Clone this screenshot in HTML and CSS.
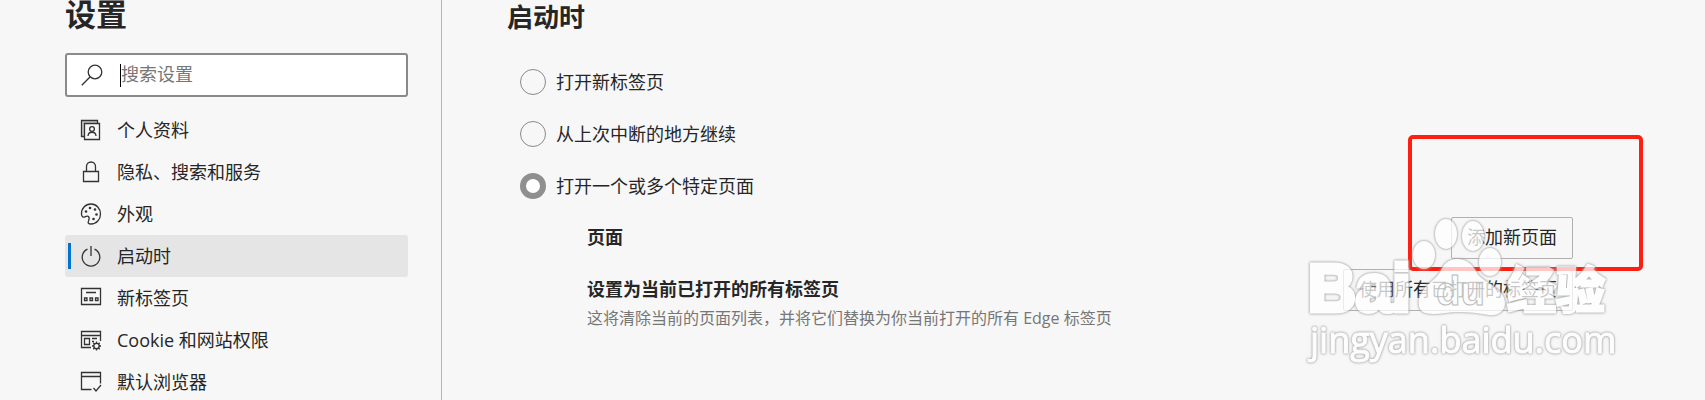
FILE: index.html
```html
<!DOCTYPE html>
<html lang="zh-CN">
<head>
<meta charset="utf-8">
<title>设置</title>
<link rel="stylesheet" href="styles.css">
</head>
<body>
<div class="layout">
  <aside class="sidebar">
    <h1 class="title">设置</h1>
    <label class="search">
      <svg class="icon search-icon" viewBox="0 0 22 22"><circle cx="14" cy="8" r="6.8"/><path d="M9.2 12.8L.8 21.2"/></svg>
      <span class="caret"></span>
      <input class="search-input" type="text" placeholder="搜索设置" aria-label="搜索设置">
    </label>
    <nav class="nav">
      <a class="nav-item" href="#"><svg class="icon" viewBox="0 0 22 22"><path d="M4 17.5H1.500V1.500H17.500V4" fill="#c8c8c8"/><path d="M4.500 4.500H19.500V20.500H4.500z" fill="#f7f7f7"/><circle cx="12" cy="10" r="2.400"/><path d="M8 17c.3-5 7.700-5 8 0"/></svg>个人资料</a>
      <a class="nav-item" href="#"><svg class="icon" viewBox="0 0 22 22"><path d="M3.500 10.500H18.500V20.500H3.500zM6.500 10V5.500a4.500 4.500 0 0 1 9 0V10"/></svg>隐私、搜索和服务</a>
      <a class="nav-item" href="#"><svg class="icon" viewBox="0 0 22 22"><path d="M1.500 11.500C1 5.500 5.500 1 11 1c5.500 0 9.500 4.500 9.500 10S16.500 21 11 21c-2.500 0-3.500-1-2.500-3 .8-1.800 1-3.500 0-4.500-1-.9-2.500-.2-3.700.4-1.800.9-3.100-.4-3.300-2.400z"/><g class="solid"><circle cx="6" cy="8.500" r="1.300"/><circle cx="10" cy="5" r="1.300"/><circle cx="15" cy="6.500" r="1.300"/><circle cx="16.500" cy="11.500" r="1.300"/><circle cx="13.500" cy="16" r="1.300"/></g></svg>外观</a>
      <a class="nav-item active" href="#" aria-current="page"><svg class="icon" viewBox="0 0 22 22"><path d="M7.500 4.200a8.800 8.800 0 1 0 7 0M11 1v10"/></svg>启动时</a>
      <a class="nav-item" href="#"><svg class="icon" viewBox="0 0 22 22"><path d="M1.500 1.500H20.500V17.500H1.500zM6 5.500H16M4.500 11h2.500v2.500H4.500zM10 11h2.500v2.500H10zM15.500 11H18v2.500h-2.500z"/></svg>新标签页</a>
      <a class="nav-item" href="#"><svg class="icon" viewBox="0 0 22 22"><path d="M11 18.500H1.500V2.500H20.500V12M1.500 6.500H20.500M4.500 9.500h5v6h-5zM12 9.500h5M12 12.500h2"/><circle cx="16.500" cy="17" r="2.700"/><path d="M16.500 12.500v2M16.500 19.500v2M12 17h2M19 17h2M13.300 13.800l1.400 1.400M18.300 18.800l1.400 1.400M19.700 13.800l-1.400 1.400M14.700 18.800l-1.400 1.400"/></svg>Cookie 和网站权限</a>
      <a class="nav-item" href="#"><svg class="icon" viewBox="0 0 22 22"><path d="M11.500 18.500H1.500V1.500H20.500V12.500M1.500 5.500H20.500M13.500 17l2.500 3 5-6"/></svg>默认浏览器</a>
    </nav>
  </aside>
  <main class="main">
    <h2 class="heading">启动时</h2>
    <div class="options">
      <label class="option"><input class="radio" type="radio" name="startup">打开新标签页</label>
      <label class="option"><input class="radio" type="radio" name="startup">从上次中断的地方继续</label>
      <label class="option"><input class="radio" type="radio" name="startup" checked>打开一个或多个特定页面</label>
    </div>
    <section class="pages">
      <div class="row">
        <h3 class="row-title">页面</h3>
        <button class="button" type="button">添加新页面</button>
      </div>
      <div class="row">
        <div class="row-text">
          <h3 class="row-title">设置为当前已打开的所有标签页</h3>
          <p class="hint">这将清除当前的页面列表，并将它们替换为你当前打开的所有 Edge 标签页</p>
        </div>
        <button class="button" type="button">使用所有已打开的标签页</button>
      </div>
    </section>
    <div class="marker"></div>
    <svg class="watermark" viewBox="0 0 325 160">
      <g class="wm">
        <ellipse cx="124" cy="45" rx="11" ry="14"/>
        <ellipse cx="146" cy="24" rx="11" ry="15"/>
        <ellipse cx="173" cy="26" rx="11" ry="15"/>
        <ellipse cx="190" cy="52" rx="11" ry="14"/>
        <path d="M157 49c10 0 16 6 20 14 5 9 28 15 28 30 0 9-8 13-16 12-11-2-20-3-31-3-12 0-22 4-33 1-6-2-7-8-6-14 3-13 16-18 21-27 4-8 8-13 17-13z"/>
        <text class="wm-brand" x="8" y="101">Bai</text>
        <text class="wm-brand-cn" x="207" y="98">经验</text>
        <text class="wm-url" x="10" y="143">jingyan.baidu.com</text>
      </g>
      <text class="wm-du" x="136" y="95">du</text>
    </svg>
  </main>
</div>
</body>
</html>
```
FILE: styles.css
```css
* { box-sizing: border-box; }
body {
  margin: 0;
  background: #f7f7f7;
  color: #262626;
  font: 18px/24px "Open Sans", "Noto Sans CJK SC", sans-serif;
}
h1, h2, h3, p { margin: 0; }

.layout { display: flex; height: 100vh; overflow: hidden; }

.sidebar {
  flex: none;
  width: 26%;
  max-width: 442px;
  padding: 0 33px 0 65px;
  border-right: 1px solid #b4b4b4;
}
.title { margin-bottom: 24px; font-size: 31px; line-height: 29px; font-weight: 700; }
.search {
  display: flex;
  align-items: center;
  height: 44px;
  padding: 0 14px;
  border: 2px solid #8a8a8a;
  border-radius: 3px;
  background: #fff;
}
.caret { width: 1px; height: 23px; margin-left: 17px; background: #000; }
.search-input {
  flex: 1;
  min-width: 0;
  padding: 0 0 3px;
  border: 0;
  outline: 0;
  background: none;
  color: inherit;
  font: inherit;
}
.search-input::placeholder { color: #767676; opacity: 1; }

.nav { margin-top: 12px; }
.nav-item {
  display: flex;
  align-items: center;
  gap: 15px;
  height: 42px;
  padding: 0 15px;
  border-radius: 3px;
  color: inherit;
  text-decoration: none;
  white-space: nowrap;
}
.nav-item.active {
  background: linear-gradient(#0073cf, #0073cf) 3px 8px / 3px 26px no-repeat #e5e5e5;
}
.icon {
  flex: none;
  width: 22px;
  height: 22px;
  fill: none;
  stroke: #333;
  stroke-width: 1.3;
}
.solid { fill: #333; stroke: none; }

.main { position: relative; flex: 1; min-width: 0; padding: 0 132px 0 65px; }
.heading { margin-bottom: 22px; font-size: 26px; line-height: 34px; font-weight: 700; }
.option { display: flex; align-items: center; gap: 10px; height: 52px; padding-left: 13px; }
.radio {
  appearance: none;
  width: 26px;
  height: 26px;
  margin: 0;
  border: 1px solid #8a8a8a;
  border-radius: 50%;
}
.radio:checked { border-width: 6px; border-color: #8f8f8f; background: #fff; }

.pages { display: grid; gap: 10px; margin-top: 5px; padding-left: 80px; }
.row { display: flex; align-items: flex-start; justify-content: space-between; }
.row-title { padding-top: 8px; font-size: 18px; line-height: 24px; font-weight: 700; }
.hint { margin-top: 5px; color: #767676; font-size: 16px; }
.button {
  height: 42px;
  padding: 0 15px 2px;
  border: 1px solid #b0b0b0;
  border-radius: 2px;
  background: none;
  color: inherit;
  font: inherit;
  white-space: nowrap;
}

.marker {
  position: absolute;
  top: 135px;
  right: 62px;
  width: 235px;
  height: 136px;
  border: 4px solid #ff1e10;
  border-radius: 5px;
}
.watermark {
  position: absolute;
  top: 210px;
  right: 80px;
  width: 325px;
  height: 160px;
  pointer-events: none;
}
.wm {
  fill: #fff;
  opacity: .75;
  filter: drop-shadow(0 0 1px #888) drop-shadow(0 0 1px #bbb);
}
.wm-brand { font: 700 66px "Liberation Sans", sans-serif; stroke: #fff; stroke-width: 5; }
.wm-brand-cn { font: 700 49px "Noto Sans CJK SC", sans-serif; stroke: #fff; stroke-width: 3; }
.wm-url { font: 36px "Open Sans", sans-serif; stroke: #fff; stroke-width: 1; }
.wm-du { font: 700 40px "Liberation Sans", sans-serif; fill: none; stroke: #bbb; stroke-width: 1; }
```
